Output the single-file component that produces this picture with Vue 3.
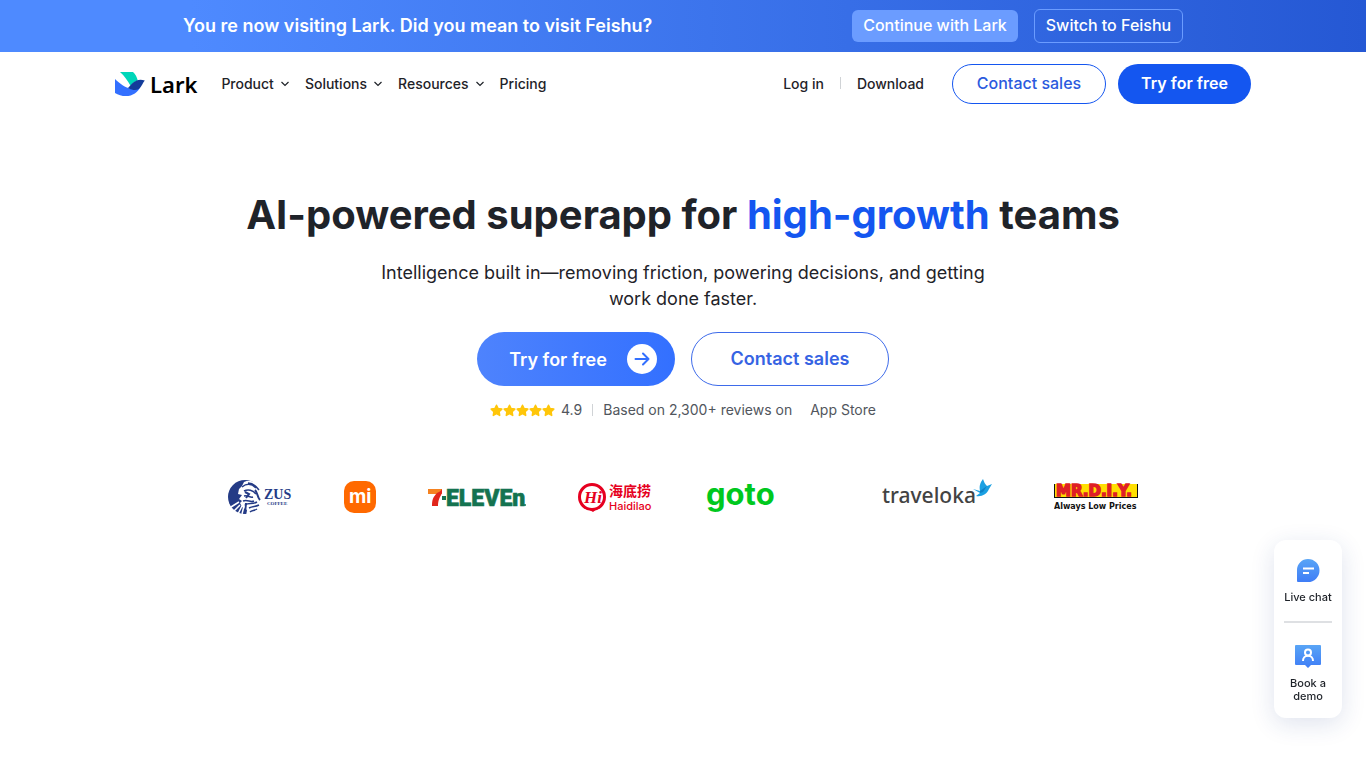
<script setup>
const menus = [
  { label: 'Product', dropdown: true },
  { label: 'Solutions', dropdown: true },
  { label: 'Resources', dropdown: true },
  { label: 'Pricing', dropdown: false }
]
</script>

<template>
  <div class="page">
    <div class="banner">
      <div class="banner-inner">
        <p>You re now visiting Lark. Did you mean to visit Feishu?</p>
        <div class="banner-actions">
          <button class="stay">Continue with Lark</button>
          <button class="switch">Switch to Feishu</button>
        </div>
      </div>
    </div>

    <header class="header">
      <a class="brand" href="#">
        <svg width="30" height="24" viewBox="0 0 30 24">
          <path fill="#00d6b9" d="M5 0h13c2.400 2.200 4 5.300 4.800 8.500-2.900.9-4.900 2.800-7.300 5.200C12.700 8.700 9.400 4 5 0z" />
          <path fill="#3370ff" d="M0 7c4.800 4.600 10 8.800 16.500 9.800 3.700.6 6.700-.7 9.300-3.100C23.200 20.500 17.500 24 11 24c-4.200 0-7.900-1-11-3.100z" />
          <path fill="#133c9a" d="M13 16c4-4.500 8.500-10.500 16.800-7.500-2 2.200-2.800 5.300-4.700 7.300-2.500 2.600-6.100 3.200-12.100.2z" />
        </svg>
        <span>Lark</span>
      </a>
      <nav class="menu">
        <a v-for="m in menus" :key="m.label" href="#">
          {{ m.label }}
          <svg v-if="m.dropdown" width="8" height="6" viewBox="0 0 8 6" fill="none" stroke="#1f2329" stroke-width="1.200">
            <path d="M.5 1 4 4.500 7.500 1" />
          </svg>
        </a>
      </nav>
      <div class="account">
        <a href="#">Log in</a>
        <i class="divider"></i>
        <a href="#">Download</a>
      </div>
      <button class="pill outline">Contact sales</button>
      <button class="pill solid">Try for free</button>
    </header>

    <main class="hero">
      <h1>AI-powered superapp for <em>high-growth</em> teams</h1>
      <p class="subtitle">Intelligence built in—removing friction, powering decisions, and getting work done faster.</p>
      <div class="cta">
        <button class="cta-btn primary">
          Try for free
          <svg width="30" height="30" viewBox="0 0 30 30" fill="none">
            <circle cx="15" cy="15" r="15" fill="#fff" />
            <path d="M8.500 15h13M16 9.500l5.500 5.500-5.500 5.500" stroke="#3370ff" stroke-width="2" stroke-linecap="round" stroke-linejoin="round" />
          </svg>
        </button>
        <button class="cta-btn secondary">Contact sales</button>
      </div>
      <div class="rating">
        <span class="stars">
          <svg v-for="n in 5" :key="n" width="13" height="13" viewBox="0 0 13 13">
            <path fill="#ffc60a" stroke="#ffc60a" stroke-width="1.500" stroke-linejoin="round" d="m6.500 1.200 1.600 3.400 3.700.5-2.700 2.600.6 3.700-3.200-1.800-3.200 1.800.6-3.700L1.200 5.100l3.700-.5z" />
          </svg>
        </span>
        <span class="score">4.9</span>
        <i class="divider"></i>
        <span class="based">Based on 2,300+ reviews on</span>
        <span>App Store</span>
      </div>

      <div class="logos">
        <svg width="64" height="36" viewBox="0 0 64 36">
          <circle cx="17" cy="18" r="17" fill="#243b86" />
          <path fill="#fff" d="M16 3c6-3 11 0 15 3l5 12-1 10-7 8-10 1 1-6-5-3-2-4 2-2-3-2 3-4-4-1 1-5 3-3z" />
          <g fill="none" stroke="#243b86" stroke-width="1.500">
            <path d="M14 8c5-4 10-3 14 1M16 12c4-2 9-1 12 3M16 17c4-1 6 2 9 1M15 22c5-2 7 2 11 0M17 26c4-3 7 0 12-3M21 29c4-2 6-1 10-3M22 33c2-2 4-1 7-3M20 4c5 0 8 3 11 7" />
            <path d="m17 13 4 2-3 4M27 11c3 3 2 7 5 10M18 24l-1 10" stroke-width="2" />
          </g>
          <g stroke="#fff" stroke-width="1.500"><path d="m12 26-6 6M14 27l-4 8M16 27l-2 8M11 23l-8 5" /></g>
          <text x="36" y="20" class="serif" font-size="14" fill="#243b86">ZUS</text>
          <text x="39" y="26" class="serif" font-size="5" fill="#243b86">COFFEE</text>
        </svg>
        <svg width="32" height="36" viewBox="0 0 32 36">
          <rect y="2" width="32" height="32" rx="10" fill="#ff6900" />
          <text x="5" y="24" class="inter" font-size="19" fill="#fff">mi</text>
        </svg>
        <svg width="98" height="36" viewBox="0 0 98 36">
          <path fill="#f58220" d="M0 10h14v5H0z" />
          <path fill="#e1251b" d="M14 10v4c-2 4-4 7-4 13H4c0-6 1-9 5-13 2-1 4-2 5-4z" />
          <path fill="#147350" d="M14 17h4v4h-4z" />
          <text x="18" y="27" class="heavy" font-size="23" fill="#147350" stroke="#147350" stroke-width=".6">ELEVEn</text>
          <circle cx="97" cy="26" r="1" fill="#147350" />
        </svg>
        <svg width="76" height="36" viewBox="0 0 76 36">
          <circle cx="14" cy="18" r="12.500" fill="none" stroke="#e60020" stroke-width="3" />
          <path fill="#e60020" d="m10 30 5 3 4-3z" />
          <text x="6" y="24" class="script" font-size="17" fill="#e60020">Hi</text>
          <text x="31" y="17" class="cjk" font-size="14" fill="#e60020">海底捞</text>
          <text x="31" y="31" class="haidilao" font-size="11" fill="#e60020">Haidilao</text>
        </svg>
        <svg width="72" height="36" viewBox="0 0 72 36">
          <text x="0" y="26" class="inter" font-size="31" fill="#00c81e">goto</text>
        </svg>
        <span class="logo-slot"></span>
        <svg width="120" height="36" viewBox="0 0 120 36">
          <text x="0" y="24" class="noto" font-size="21" fill="#434343">traveloka</text>
          <path fill="#1ba0e2" d="m91 10 7 2c-1-5 0-8 3-12 1 3 2 5 4 7l5-2-3 5c-2 5-7 8-13 7l4-3-7-4z" />
          <path fill="#0d80c6" d="m98 12 7-5-4 6-3 1z" />
        </svg>
        <svg width="84" height="36" viewBox="0 0 84 36">
          <path fill="#111" d="M0 5h84v14H0z" />
          <path fill="#ffdf00" d="M1 5h82v13H1z" />
          <text x="2" y="17" class="slab" font-size="15" fill="#df1f26" stroke="#df1f26" stroke-width="1.500">MR.D.I.Y.</text>
          <text x="0" y="30" class="slab" font-size="8" fill="#111">Always Low Prices</text>
        </svg>
      </div>
    </main>

    <aside class="contact-card">
      <a href="#">
        <svg width="24" height="24" viewBox="0 0 24 24">
          <defs>
            <linearGradient id="tint" x1="0" y1="0" x2="0" y2="1">
              <stop offset="0" stop-color="#59a5f6" />
              <stop offset="1" stop-color="#3f7df6" />
            </linearGradient>
          </defs>
          <path fill="url(#tint)" d="M12 1a11.500 11.500 0 0 1 0 23H2a1 1 0 0 1-1-1V12A11 11 0 0 1 12 1z" />
          <path d="M7 10.500h11M7 15h6" stroke="#fff" stroke-width="2" />
        </svg>
        <span>Live chat</span>
      </a>
      <hr />
      <a href="#">
        <svg width="26" height="24" viewBox="0 0 26 24">
          <path fill="url(#tint)" d="M1 1h24a1 1 0 0 1 1 1v18a1 1 0 0 1-1 1h-9l-3 3-3-3H1a1 1 0 0 1-1-1V2a1 1 0 0 1 1-1z" />
          <g fill="none" stroke="#fff" stroke-width="2">
            <circle cx="13" cy="8.500" r="3" />
            <path d="M8 17c0-3 2-5.200 5-5.200s5 2.200 5 5.200" />
          </g>
        </svg>
        <span>Book a demo</span>
      </a>
    </aside>
  </div>
</template>

<style>
body {
  margin: 0;
  background: #fff;
}
</style>

<style scoped>
.page {
  font-family: Inter, "Liberation Sans", sans-serif;
  color: #1f2329;
}
a {
  color: inherit;
  text-decoration: none;
}
button {
  box-sizing: border-box;
  padding: 0 0 2px;
  border: none;
  font-family: inherit;
  cursor: pointer;
}
svg {
  flex: none;
}
.divider {
  width: 1px;
  height: 12px;
  background: #d0d3d6;
}

.banner {
  background: linear-gradient(90deg, #4e8aff 0%, #4e8aff 14%, #2558d4 100%);
  color: #fff;
}
.banner-inner {
  display: flex;
  align-items: center;
  justify-content: space-between;
  max-width: 1000px;
  height: 52px;
  margin: 0 auto;
}
.banner p {
  margin: 0;
  padding-bottom: 2px;
  font-size: 18px;
  font-weight: 600;
}
.banner-actions {
  display: flex;
  align-items: center;
  gap: 16px;
}
.banner button {
  border-radius: 6px;
  color: #fff;
  font-size: 16px;
  font-weight: 500;
}
.stay {
  width: 166px;
  height: 32px;
  background: #6b9cff;
}
.banner .switch {
  width: 149px;
  height: 34px;
  border: 1px solid #6b9cff;
  background: transparent;
}

.header {
  display: flex;
  align-items: center;
  max-width: 1136px;
  height: 64px;
  margin: 0 auto;
  font-size: 14px;
  font-weight: 500;
}
.brand {
  display: flex;
  align-items: center;
  gap: 5px;
  color: #000;
  font-family: "Noto Sans", sans-serif;
  font-size: 22px;
  font-weight: 600;
}
.menu {
  display: flex;
  gap: 16px;
  margin-left: 24px;
  padding-bottom: 2px;
}
.menu a {
  display: flex;
  align-items: center;
  gap: 7px;
}
.menu svg {
  margin-top: 2px;
}
.account {
  display: flex;
  align-items: center;
  gap: 16px;
  margin-left: auto;
  margin-right: 28px;
  padding-bottom: 2px;
}
.pill {
  height: 40px;
  border-radius: 20px;
  font-size: 16px;
}
.pill.outline {
  width: 154px;
  border: 1px solid #1456f0;
  background: #fff;
  color: #2b5ade;
  font-weight: 500;
}
.pill.solid {
  width: 133px;
  margin-left: 12px;
  background: #1456f0;
  color: #fff;
  font-weight: 600;
}

.hero {
  display: flex;
  flex-direction: column;
  align-items: center;
  padding-top: 72px;
}
h1 {
  margin: 0;
  font-size: 40px;
  line-height: 54px;
  font-weight: 700;
  text-align: center;
}
h1 em {
  color: #1456f0;
  font-style: normal;
}
.subtitle {
  max-width: 610px;
  margin: 18px 0 20px;
  font-size: 18px;
  line-height: 26px;
  text-align: center;
}
.cta {
  display: flex;
  gap: 16px;
}
.cta-btn {
  display: flex;
  align-items: center;
  justify-content: center;
  gap: 20px;
  width: 198px;
  height: 54px;
  border-radius: 27px;
  font-size: 18px;
  font-weight: 600;
}
.primary {
  padding: 0 0 0 14px;
  background: linear-gradient(90deg, #4e83fd, #3370ff);
  color: #fff;
}
.secondary {
  border: 1px solid #3e6bea;
  background: #fff;
  color: #3663e3;
}
.rating {
  display: flex;
  align-items: center;
  margin-top: 14px;
  color: #51565d;
  font-size: 14px;
  line-height: 20px;
}
.stars {
  display: flex;
}
.score {
  margin: 0 10px 0 6px;
}
.based {
  margin: 0 18px 0 10px;
}
.logos {
  display: flex;
  align-items: center;
  justify-content: center;
  gap: 52px;
  margin-top: 59px;
}
.serif {
  font-family: "Liberation Serif", serif;
  font-weight: 700;
}
.inter {
  font-family: Inter, sans-serif;
  font-weight: 700;
}
.haidilao {
  font-family: Inter, sans-serif;
  font-weight: 500;
}
.heavy {
  font-family: "Liberation Sans Narrow", Roboto, sans-serif;
  font-weight: 900;
}
.script {
  font-family: "Liberation Serif", serif;
  font-style: italic;
  font-weight: 700;
}
.cjk {
  font-family: "Noto Sans CJK SC", sans-serif;
  font-weight: 700;
}
.noto {
  font-family: "Noto Sans", sans-serif;
  font-weight: 500;
}
.slab {
  font-family: "DejaVu Sans", sans-serif;
  font-weight: 700;
}

.contact-card {
  position: fixed;
  right: 24px;
  bottom: 50px;
  display: flex;
  flex-direction: column;
  align-items: center;
  box-sizing: border-box;
  width: 68px;
  padding: 18px 10px 15px;
  border-radius: 12px;
  background: #fff;
  box-shadow: 0 6px 24px rgba(31, 60, 135, 0.14);
  font-size: 11px;
  line-height: 13px;
  font-weight: 500;
  text-align: center;
}
.contact-card a {
  display: flex;
  flex-direction: column;
  align-items: center;
  gap: 9px;
}
.contact-card span {
  white-space: nowrap;
}
.contact-card a:last-child span {
  white-space: normal;
}
hr {
  width: 100%;
  height: 2px;
  margin: 17px 0 21px;
  border: none;
  background: #dee0e3;
}
</style>
